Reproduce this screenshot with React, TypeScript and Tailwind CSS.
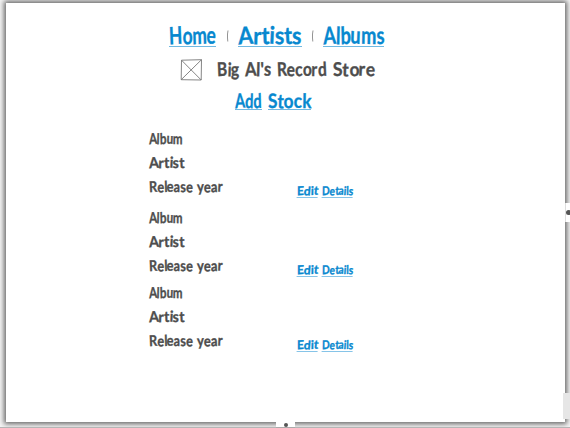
import { useLayoutEffect, useRef, useState } from "react";

// Small tilts and baseline shifts that give each letter an uneven, handwritten stance.
const stances = [
  "inline-block -rotate-3",
  "inline-block rotate-2 translate-y-[0.3px]",
  "inline-block -rotate-2",
  "inline-block rotate-3 -translate-y-[0.3px]",
  "inline-block rotate-1",
];

// A run of lettering condensed horizontally to the width of its box.
function Fit({ text, className }: { text: string; className: string }) {
  const ref = useRef<HTMLSpanElement>(null);
  const [scale, setScale] = useState(1);
  useLayoutEffect(() => {
    const el = ref.current;
    if (el && el.parentElement) setScale(el.parentElement.clientWidth / el.offsetWidth);
  }, [text]);
  return (
    <span className={`block shrink-0 ${className}`}>
      <span
        ref={ref}
        className="inline-block origin-left whitespace-pre align-top [-webkit-text-stroke:0.35px_currentColor]"
        style={{ transform: `scaleX(${scale})` }}
      >
        {Array.from(text).map((letter, i) => (
          <span key={i} className={stances[i % 5]}>{letter}</span>
        ))}
      </span>
    </span>
  );
}

function Separator() {
  return (
    <svg className="mt-[11px] h-3 w-[3px] shrink-0" viewBox="0 0 3 12" fill="none" stroke="#888" strokeWidth="0.9">
      <path d="M2 0.5 1.5 4 1.5 8 1.8 11.5" />
    </svg>
  );
}

function StockItem() {
  return (
    <section className="pl-[143px] text-[15px] leading-6 text-[#4d4d4d]">
      <Fit text="Album" className="h-6 w-[34px]" />
      <Fit text="Artist" className="h-6 w-9" />
      <div className="flex h-6">
        <Fit text="Release" className="w-[44px]" />
        <Fit text="year" className="ml-1 w-[25px]" />
        <div className="ml-[75px] flex gap-1 pt-[7px] text-[12px] leading-5 text-[#0788cf]">
          <Fit text="Edit" className="h-[17px] w-[21px] -skew-x-3 border-b border-[#86c4e8]" />
          <Fit text="Details" className="h-[17px] w-[31px] -skew-x-3 border-b border-[#86c4e8]" />
        </div>
      </div>
    </section>
  );
}

export default function App() {
  return (
    <div className="relative h-[428px] w-[570px] overflow-hidden bg-[#f5f5f5] pl-1.5 pt-[3px] font-['Lato','Liberation_Sans',sans-serif] font-bold">
      <main className="h-[419px] w-[559px] bg-white pt-4 shadow-[0_0_5px_2px_#666]">
        <nav className="flex h-[37px] pl-[163px] text-[24px] leading-[31px] text-[#0788cf]">
          <Fit text="Home" className="h-7 w-[47px] border-b border-[#70b9e2]" />
          <div className="flex w-[22px] justify-center"><Separator /></div>
          <Fit text="Artists" className="h-7 w-16 border-b border-[#70b9e2]" />
          <div className="flex w-[21px] justify-center"><Separator /></div>
          <Fit text="Albums" className="h-7 w-[61px] border-b border-[#70b9e2]" />
        </nav>
        <header className="flex h-8 pl-[174px] text-[19px] leading-[25px] text-[#4d4d4d]">
          <svg className="mr-3.5 mt-[3px] h-[22px] w-[23px] shrink-0" viewBox="0 0 23 22" fill="none" stroke="#777" strokeWidth="0.9">
            <path d="M1.5 1.2 21.5.7 21.2 21 1.2 20.7ZM1.5 1.2 21.2 21M21.5.7 1.2 20.7" />
          </svg>
          <Fit text="Big" className="w-[22px]" />
          <Fit text="Al's" className="ml-1.5 w-[26px]" />
          <Fit text="Record" className="ml-1.5 w-[49px]" />
          <Fit text="Store" className="ml-[7px] w-[42px]" />
        </header>
        <div className="flex h-[38px] gap-1.5 pl-[229px] text-[20px] leading-[25px] text-[#0788cf]">
          <Fit text="Add" className="h-[22px] w-[27px] border-b border-[#70b9e2]" />
          <Fit text="Stock" className="h-[22px] w-[43px] border-b border-[#70b9e2]" />
        </div>
        <StockItem />
        <div className="h-[7px]" />
        <StockItem />
        <div className="h-[3px]" />
        <StockItem />
      </main>
      <div className="absolute bottom-0 left-0 h-px w-full bg-[#b5b5b5]" />
      <div className="absolute left-[565px] top-[203px] flex h-[19px] w-[5px] items-center justify-end overflow-hidden border-l border-[#ddd] bg-white">
        <span className="-mr-px size-[5px] shrink-0 rounded-full bg-[#555]" />
      </div>
      <div className="absolute left-[563px] top-[393px] h-[26px] w-[7px] bg-[#e6e6e6]" />
      <div className="absolute left-[276px] top-[422px] flex h-[6px] w-[19px] justify-center border-b border-[#aaa] bg-white pt-px">
        <span className="size-1 rounded-full bg-[#555]" />
      </div>
    </div>
  );
}
